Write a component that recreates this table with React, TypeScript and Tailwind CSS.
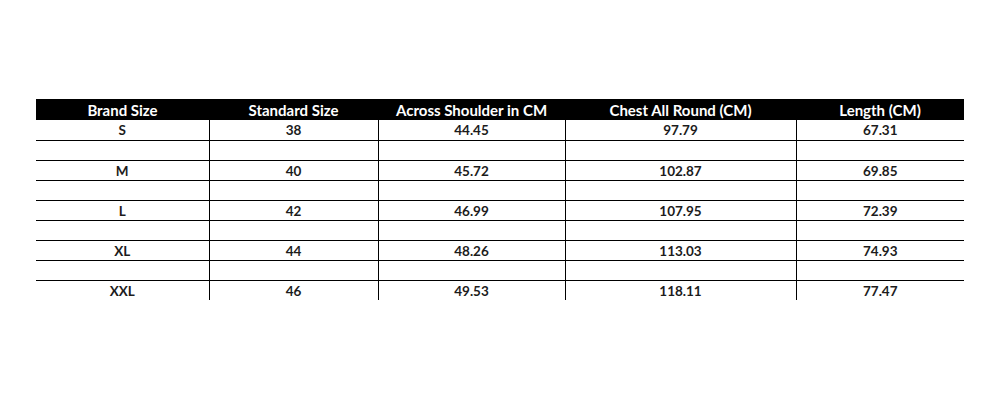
const headers = [
  "Brand Size",
  "Standard Size",
  "Across Shoulder in CM",
  "Chest All Round (CM)",
  "Length (CM)",
];

const rows = [
  ["S", "38", "44.45", "97.79", "67.31"],
  ["M", "40", "45.72", "102.87", "69.85"],
  ["L", "42", "46.99", "107.95", "72.39"],
  ["XL", "44", "48.26", "113.03", "74.93"],
  ["XXL", "46", "49.53", "118.11", "77.47"],
];

const widths = ["w-[173px]", "w-[169px]", "w-[187px]", "w-[231px]", "w-[168px]"];

export default function App() {
  // spacer rows sit between each size row
  const body: (string[] | null)[] = [];
  rows.forEach((r, i) => {
    body.push(r);
    if (i < rows.length - 1) body.push(null);
  });

  return (
    <div className="w-[1000px] h-[400px] bg-white font-['Lato','Open_Sans',sans-serif]">
      <div className="pt-[99px] pl-[36px]">
        <table className="border-collapse table-fixed w-[928px]">
          <thead>
            <tr className="bg-black h-[21px]">
              {headers.map((h, i) => (
                <th
                  key={h}
                  className={`${widths[i]} p-0 pt-[1px] text-center text-white text-[15px] font-bold leading-[20px]`}
                >
                  {h}
                </th>
              ))}
            </tr>
          </thead>
          <tbody>
            {body.map((r, ri) => (
              <tr
                key={ri}
                className={`h-[20px] ${ri < body.length - 1 ? "border-b border-black" : ""}`}
              >
                {[0, 1, 2, 3, 4].map((ci) => (
                  <td
                    key={ci}
                    className={`p-0 pt-[2px] text-center text-[13.5px] font-bold leading-[17px] text-[#1c1c1c] ${
                      ci > 0 ? "border-l border-black" : ""
                    }`}
                  >
                    {r ? r[ci] : ""}
                  </td>
                ))}
              </tr>
            ))}
          </tbody>
        </table>
      </div>
    </div>
  );
}
